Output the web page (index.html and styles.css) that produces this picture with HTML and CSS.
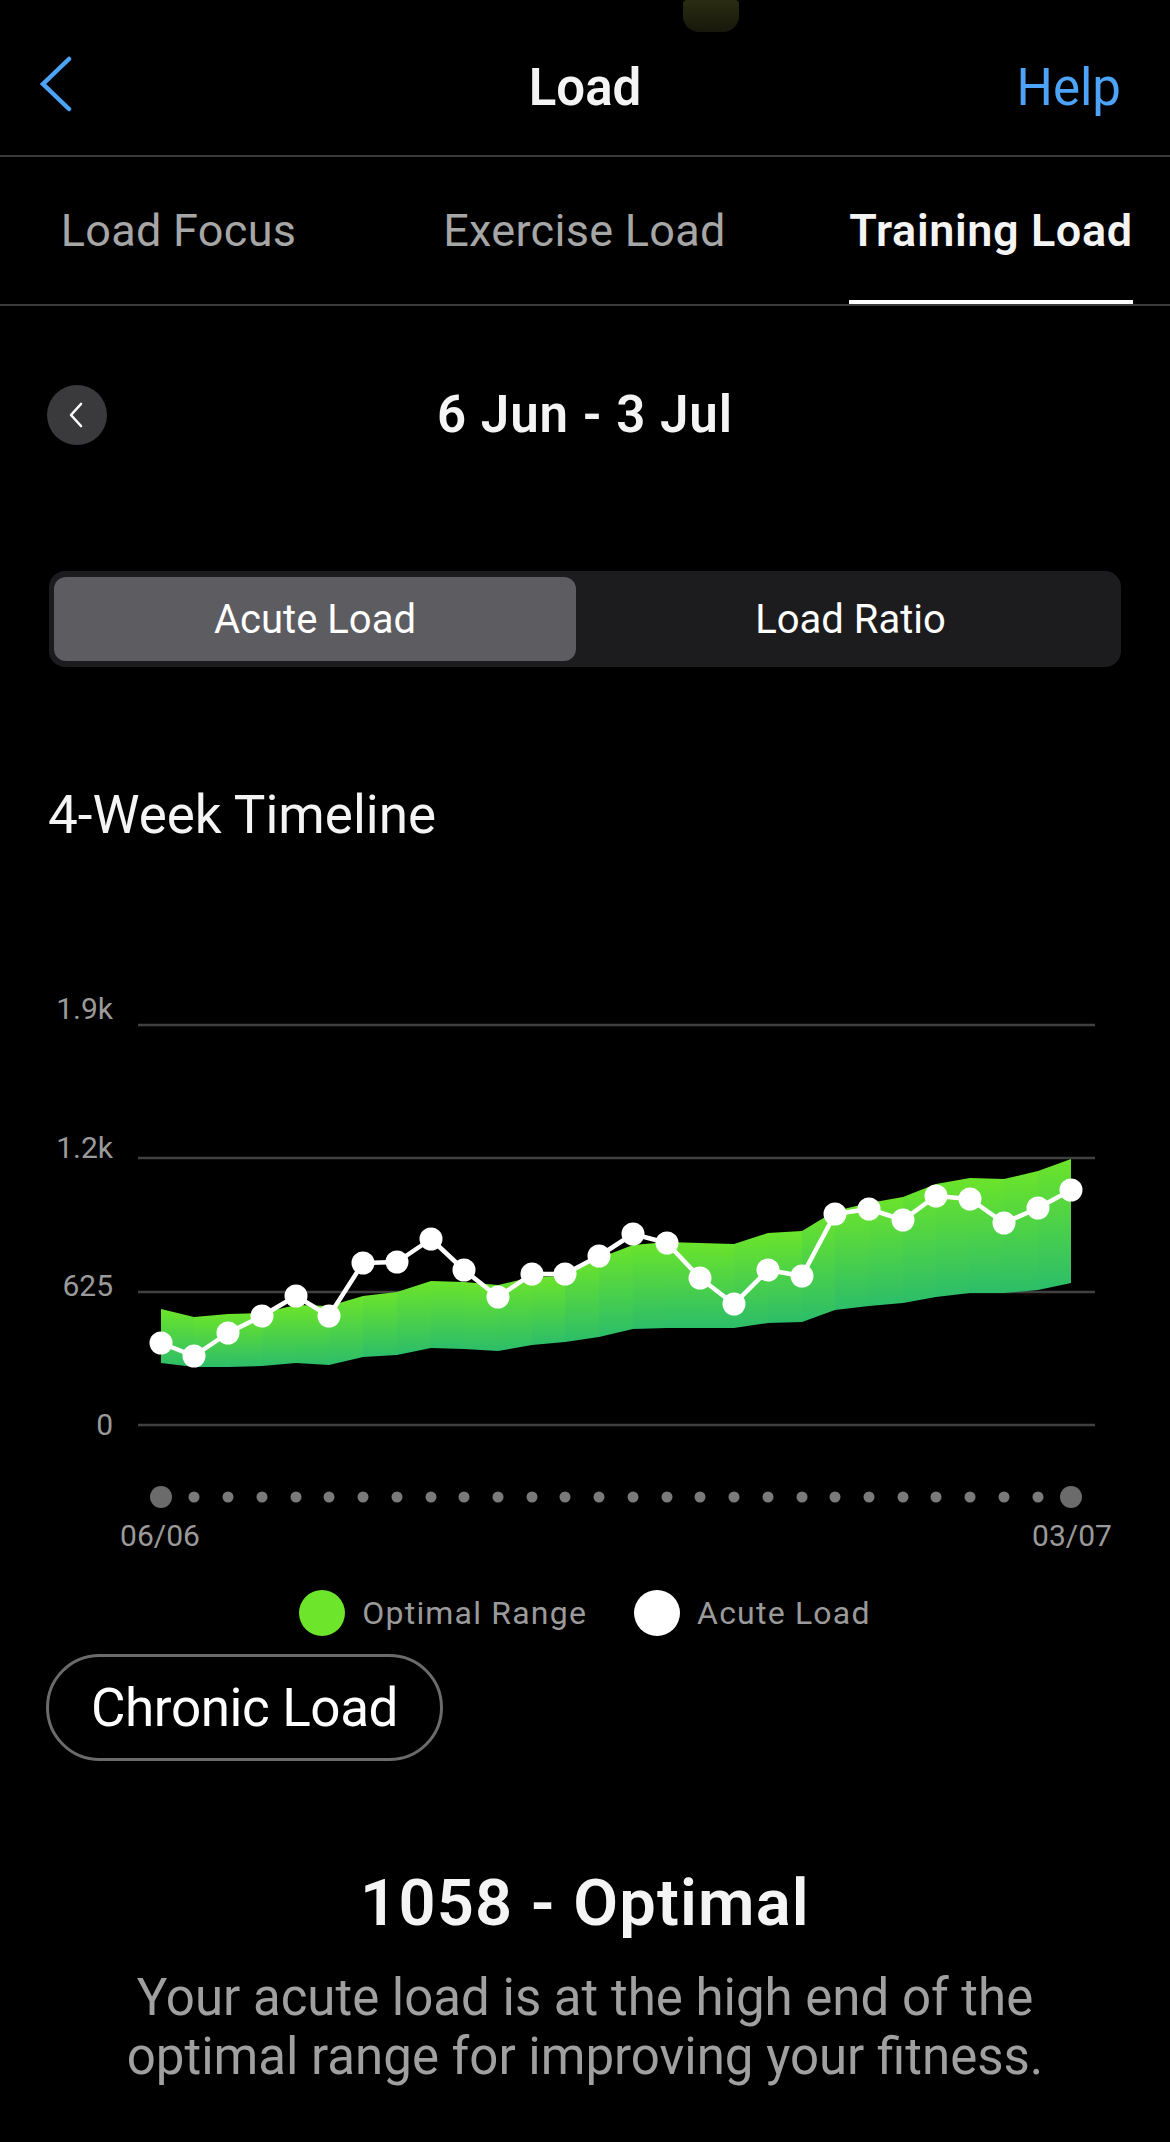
FILE: index.html
```html
<!DOCTYPE html>
<html lang="en">
<head>
<meta charset="utf-8">
<title>Load</title>
<link rel="stylesheet" href="styles.css">
</head>
<body>
<div class="notch"></div>
<header class="navbar">
  <div class="nav-left">
    <svg class="back" viewBox="0 0 34 56" width="34" height="56"><polyline points="30,3 4,28 30,53" fill="none" stroke="#4da3f7" stroke-width="4.5" stroke-linecap="round" stroke-linejoin="miter"/></svg>
  </div>
  <h1 class="nav-title">Load</h1>
  <div class="nav-right"><span class="help">Help</span></div>
</header>

<nav class="tabs">
  <div class="tab"><span class="tab-label">Load Focus</span></div>
  <div class="tab"><span class="tab-label">Exercise Load</span></div>
  <div class="tab tab-active"><span class="tab-label">Training Load</span></div>
</nav>

<div class="period">
  <div class="period-left">
    <button class="circle-btn" aria-label="Previous"><svg viewBox="0 0 16 26" width="16" height="26"><polyline points="13,2 3,13 13,24" fill="none" stroke="#fff" stroke-width="2.6" stroke-linecap="round" stroke-linejoin="round"/></svg></button>
  </div>
  <h2 class="period-title">6 Jun - 3 Jul</h2>
  <div></div>
</div>

<div class="segmented">
  <div class="seg seg-active">Acute Load</div>
  <div class="seg">Load Ratio</div>
</div>

<h3 class="section-title">4-Week Timeline</h3>

<svg class="chart" viewBox="0 0 1170 600" width="1170" height="600">
  <defs>
    <linearGradient id="band" x1="0" y1="0" x2="0" y2="1">
      <stop offset="0" stop-color="#6be42a"/>
      <stop offset="1" stop-color="#2cbd69"/>
    </linearGradient>
  </defs>
  <g class="grid">
    <line x1="138" y1="65" x2="1095" y2="65"/>
    <line x1="138" y1="198" x2="1095" y2="198"/>
    <line x1="138" y1="332" x2="1095" y2="332"/>
    <line x1="138" y1="465" x2="1095" y2="465"/>
  </g>
  <g class="axis-label" text-anchor="end">
    <text x="113" y="59">1.9k</text>
    <text x="113" y="198">1.2k</text>
    <text x="113" y="336">625</text>
    <text x="113" y="475">0</text>
  </g>
  <g fill="url(#band)">
    <polygon points="161,349 194,357 194,407 161,403"/>
    <polygon points="194,357 228,354 228,407 194,407"/>
    <polygon points="228,354 262,353 262,406 228,407"/>
    <polygon points="262,353 296,345 296,403 262,406"/>
    <polygon points="296,345 329,346 329,405 296,403"/>
    <polygon points="329,346 363,336 363,397 329,405"/>
    <polygon points="363,336 397,332 397,395 363,397"/>
    <polygon points="397,332 431,321 431,388 397,395"/>
    <polygon points="431,321 464,322 464,389 431,388"/>
    <polygon points="464,322 498,325 498,391 464,389"/>
    <polygon points="498,325 532,317 532,385 498,391"/>
    <polygon points="532,317 565,316 565,382 532,385"/>
    <polygon points="565,316 599,298 599,377 565,382"/>
    <polygon points="599,298 633,285 633,369 599,377"/>
    <polygon points="633,285 667,282 667,368 633,369"/>
    <polygon points="667,282 700,283 700,368 667,368"/>
    <polygon points="700,283 734,284 734,368 700,368"/>
    <polygon points="734,284 768,273 768,363 734,368"/>
    <polygon points="768,273 802,271 802,362 768,363"/>
    <polygon points="802,271 835,251 835,350 802,362"/>
    <polygon points="835,251 869,243 869,346 835,350"/>
    <polygon points="869,243 903,237 903,343 869,346"/>
    <polygon points="903,237 936,224 936,337 903,343"/>
    <polygon points="936,224 970,218 970,333 936,337"/>
    <polygon points="970,218 1004,219 1004,333 970,333"/>
    <polygon points="1004,219 1038,211 1038,330 1004,333"/>
    <polygon points="1038,211 1071,199 1071,323 1038,330"/>
  </g>
  <polyline class="acute-line" points="161,383 194,396 228,373 262,356 296,336 329,356 363,303 397,302 431,279 464,310 498,337 532,314 565,314 599,296 633,274 667,283 700,318 734,344 768,310 802,316 835,254 869,249 903,260 936,236 970,239 1004,263 1038,248 1071,230"/>
  <g class="acute-dots">
    <circle cx="161" cy="383" r="11.5"/><circle cx="194" cy="396" r="11.5"/><circle cx="228" cy="373" r="11.5"/><circle cx="262" cy="356" r="11.5"/>
    <circle cx="296" cy="336" r="11.5"/><circle cx="329" cy="356" r="11.5"/><circle cx="363" cy="303" r="11.5"/><circle cx="397" cy="302" r="11.5"/>
    <circle cx="431" cy="279" r="11.5"/><circle cx="464" cy="310" r="11.5"/><circle cx="498" cy="337" r="11.5"/><circle cx="532" cy="314" r="11.5"/>
    <circle cx="565" cy="314" r="11.5"/><circle cx="599" cy="296" r="11.5"/><circle cx="633" cy="274" r="11.5"/><circle cx="667" cy="283" r="11.5"/>
    <circle cx="700" cy="318" r="11.5"/><circle cx="734" cy="344" r="11.5"/><circle cx="768" cy="310" r="11.5"/><circle cx="802" cy="316" r="11.5"/>
    <circle cx="835" cy="254" r="11.5"/><circle cx="869" cy="249" r="11.5"/><circle cx="903" cy="260" r="11.5"/><circle cx="936" cy="236" r="11.5"/>
    <circle cx="970" cy="239" r="11.5"/><circle cx="1004" cy="263" r="11.5"/><circle cx="1038" cy="248" r="11.5"/><circle cx="1071" cy="230" r="11.5"/>
  </g>
  <g class="day-dots">
    <circle cx="161" cy="537" r="11" class="day-end"/>
    <circle cx="194" cy="537" r="5.5"/><circle cx="228" cy="537" r="5.5"/><circle cx="262" cy="537" r="5.5"/><circle cx="296" cy="537" r="5.5"/>
    <circle cx="329" cy="537" r="5.5"/><circle cx="363" cy="537" r="5.5"/><circle cx="397" cy="537" r="5.5"/><circle cx="431" cy="537" r="5.5"/>
    <circle cx="464" cy="537" r="5.5"/><circle cx="498" cy="537" r="5.5"/><circle cx="532" cy="537" r="5.5"/><circle cx="565" cy="537" r="5.5"/>
    <circle cx="599" cy="537" r="5.5"/><circle cx="633" cy="537" r="5.5"/><circle cx="667" cy="537" r="5.5"/><circle cx="700" cy="537" r="5.5"/>
    <circle cx="734" cy="537" r="5.5"/><circle cx="768" cy="537" r="5.5"/><circle cx="802" cy="537" r="5.5"/><circle cx="835" cy="537" r="5.5"/>
    <circle cx="869" cy="537" r="5.5"/><circle cx="903" cy="537" r="5.5"/><circle cx="936" cy="537" r="5.5"/><circle cx="970" cy="537" r="5.5"/>
    <circle cx="1004" cy="537" r="5.5"/><circle cx="1038" cy="537" r="5.5"/>
    <circle cx="1071" cy="537" r="11" class="day-end"/>
  </g>
  <g class="axis-label" text-anchor="middle">
    <text x="160" y="586">06/06</text>
    <text x="1072" y="586">03/07</text>
  </g>
</svg>

<div class="legend">
  <div class="legend-item"><span class="swatch swatch-green"></span><span>Optimal Range</span></div>
  <div class="legend-item"><span class="swatch swatch-white"></span><span>Acute Load</span></div>
</div>

<button class="chronic-btn">Chronic Load</button>

<section class="summary">
  <h2 class="summary-title">1058 - Optimal</h2>
  <p class="summary-text">Your acute load is at the high end of the<br>optimal range for improving your fitness.</p>
</section>
</body>
</html>
```

FILE: styles.css
```css
html, body {
  margin: 0;
  padding: 0;
  background: #000;
}

body {
  width: 1170px;
  min-height: 2142px;
  overflow: hidden;
  position: relative;
  font-family: "Roboto", "Liberation Sans", sans-serif;
  color: #fff;
}

.notch {
  position: absolute;
  left: 683px;
  top: 0;
  width: 56px;
  height: 32px;
  border-radius: 4px 4px 16px 16px;
  background: linear-gradient(#2a2c12, #17180b);
}

/* nav bar */
.navbar {
  display: grid;
  grid-template-columns: 1fr auto 1fr;
  height: 155px;
  border-bottom: 2px solid #3a3a3c;
}

.back {
  display: block;
  margin: 56px 0 0 39px;
}

.nav-title {
  margin: 58px 0 0;
  font-size: 51px;
  line-height: 60px;
  font-weight: 600;
  color: #f4f4f4;
  align-self: start;
}

.nav-right {
  display: flex;
  justify-content: flex-end;
  padding-right: 49px;
}

.help {
  margin-top: 58px;
  font-size: 51px;
  line-height: 60px;
  color: #4da3f7;
}

/* tabs */
.tabs {
  display: grid;
  grid-template-columns: 357px 455px 1fr;
  border-bottom: 2px solid #3a3a3c;
}

.tab {
  display: flex;
  justify-content: center;
}

.tab-label {
  padding-top: 48px;
  padding-bottom: 43px;
  font-size: 45px;
  line-height: 52px;
  letter-spacing: 0.3px;
  color: #a6a6a6;
  border-bottom: 4px solid transparent;
}

.tab-active .tab-label {
  color: #f4f4f4;
  font-weight: 600;
  letter-spacing: 0.6px;
  border-bottom-color: #fff;
}

/* period */
.period {
  display: grid;
  grid-template-columns: 1fr auto 1fr;
  align-items: center;
  margin-top: 79px;
  height: 60px;
}

.circle-btn {
  margin-left: 47px;
  width: 60px;
  height: 60px;
  border-radius: 50%;
  border: 0;
  padding: 0;
  background: #3a3a3c;
  display: flex;
  align-items: center;
  justify-content: center;
}

.circle-btn svg {
  display: block;
  margin-left: -2px;
}

.period-title {
  margin: 0;
  font-size: 51px;
  line-height: 60px;
  font-weight: 600;
  letter-spacing: 1px;
  color: #f4f4f4;
}

/* segmented */
.segmented {
  margin: 126px 49px 0;
  height: 96px;
  box-sizing: border-box;
  padding: 6px 5px;
  background: #1c1c1e;
  border-radius: 16px;
  display: grid;
  grid-template-columns: 1fr 1fr;
}

.seg {
  display: flex;
  align-items: center;
  justify-content: center;
  font-size: 40px;
  color: #fff;
  border-radius: 12px;
}

.seg-active {
  background: #5c5c61;
  margin-right: 9px;
}

.section-title {
  margin: 117px 0 0 48px;
  font-size: 53px;
  line-height: 62px;
  font-weight: 400;
  color: #f4f4f4;
}

/* chart */
.chart {
  display: block;
  margin-top: 114px;
}

.grid line {
  stroke: #404040;
  stroke-width: 2.5;
}

.axis-label {
  font-family: "Roboto", "Liberation Sans", sans-serif;
  font-size: 30px;
  fill: #9a9a9a;
}

.acute-line {
  fill: none;
  stroke: #fff;
  stroke-width: 4.5;
  stroke-linejoin: round;
}

.acute-dots circle {
  fill: #fff;
}

.day-dots circle {
  fill: #7a7a7a;
}

.day-dots .day-end {
  fill: #6b6b6b;
}

/* legend */
.legend {
  display: flex;
  justify-content: center;
  align-items: center;
  gap: 47px;
  height: 46px;
  margin-top: 30px;
}

.legend-item {
  display: flex;
  align-items: center;
  gap: 17px;
  font-size: 32px;
  letter-spacing: 1.2px;
  color: #9a9a9a;
}

.swatch {
  width: 46px;
  height: 46px;
  border-radius: 50%;
}

.swatch-green { background: #6ce52a; }
.swatch-white { background: #fff; }

/* chronic */
.chronic-btn {
  display: flex;
  align-items: center;
  justify-content: center;
  margin: 18px 0 0 46px;
  width: 397px;
  height: 107px;
  box-sizing: border-box;
  border: 3px solid #6b6b6b;
  border-radius: 54px;
  background: transparent;
  color: #fff;
  font-family: "Roboto", "Liberation Sans", sans-serif;
  font-size: 53px;
  letter-spacing: -0.4px;
  padding: 0;
}

/* summary */
.summary {
  text-align: center;
}

.summary-title {
  margin: 104px 0 0;
  font-size: 65px;
  line-height: 76px;
  font-weight: 600;
  letter-spacing: 1.2px;
  color: #f4f4f4;
}

.summary-text {
  margin: 27px 0 0;
  font-size: 51px;
  line-height: 59px;
  color: #a0a0a0;
}
```
